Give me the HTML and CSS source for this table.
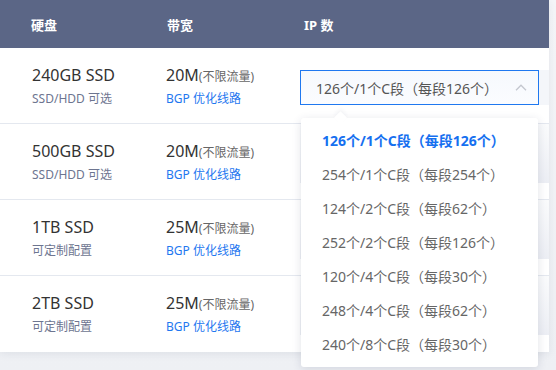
FILE: index.html
```html
<!DOCTYPE html>
<html lang="zh">
<head>
<meta charset="utf-8">
<link rel="stylesheet" href="styles.css">
</head>
<body>
<div class="page">
  <div class="table">
    <div class="head">
      <div class="h h1">硬盘</div>
      <div class="h h2">带宽</div>
      <div class="h h3">IP 数</div>
    </div>
    <div class="row">
      <div class="c1"><div class="title">240GB SSD</div><div class="sub">SSD/HDD 可选</div></div>
      <div class="c2"><div class="title">20M<span class="small">(不限流量)</span></div><div class="link">BGP 优化线路</div></div>
      <div class="c3">
        <div class="select">
          <span class="val">126个/1个C段（每段126个）</span>
          <svg class="chev" width="12" height="7" viewBox="0 0 12 7"><path d="M1 6.2 L6 1.2 L11 6.2" fill="none" stroke="#c4c7cf" stroke-width="1.3"/></svg>
        </div>
      </div>
    </div>
    <div class="row">
      <div class="c1"><div class="title">500GB SSD</div><div class="sub">SSD/HDD 可选</div></div>
      <div class="c2"><div class="title">20M<span class="small">(不限流量)</span></div><div class="link">BGP 优化线路</div></div>
      <div class="c3"><div class="shade"></div></div>
    </div>
    <div class="row">
      <div class="c1"><div class="title">1TB SSD</div><div class="sub">可定制配置</div></div>
      <div class="c2"><div class="title">25M<span class="small">(不限流量)</span></div><div class="link">BGP 优化线路</div></div>
      <div class="c3"><div class="shade"></div></div>
    </div>
    <div class="row last">
      <div class="c1"><div class="title">2TB SSD</div><div class="sub">可定制配置</div></div>
      <div class="c2"><div class="title">25M<span class="small">(不限流量)</span></div><div class="link">BGP 优化线路</div></div>
      <div class="c3"><div class="shade"></div></div>
    </div>
  </div>

  <div class="menu">
    <div class="arrow"></div>
    <div class="item active">126个/1个C段（每段126个）</div>
    <div class="item">254个/1个C段（每段254个）</div>
    <div class="item">124个/2个C段（每段62个）</div>
    <div class="item">252个/2个C段（每段126个）</div>
    <div class="item">120个/4个C段（每段30个）</div>
    <div class="item">248个/4个C段（每段62个）</div>
    <div class="item">240个/8个C段（每段30个）</div>
  </div>
</div>
</body>
</html>
```

FILE: styles.css
```css
html, body {
  margin: 0;
  padding: 0;
}
body {
  width: 556px;
  height: 370px;
  overflow: hidden;
  font-family: "Noto Sans", "Noto Sans CJK SC", sans-serif;
  background: linear-gradient(to bottom, #f4f5f8 0%, #eef0f4 100%);
}
.page {
  position: relative;
  width: 556px;
  height: 370px;
}
.table {
  width: 549px;
  background: #fff;
  box-shadow: 0 2px 8px rgba(40, 50, 80, 0.08);
}
.head {
  height: 48px;
  background: #5b6686;
  display: flex;
  align-items: center;
  color: #fff;
  font-weight: 700;
  font-size: 13px;
}
.h1 { margin-left: 31px; width: 136px; }
.h2 { width: 137px; }
.row {
  height: 75px;
  border-bottom: 1px solid #e4e8ef;
  display: flex;
}
.row.last { border-bottom: none; height: 76px; }
.c1 {
  width: 166px;
  padding-left: 32px;
  padding-top: 16px;
  box-sizing: border-box;
}
.c2 {
  width: 134px;
  padding-top: 16px;
  box-sizing: border-box;
}
.c3 {
  flex: 1;
}
.title {
  font-size: 16px;
  color: #333;
  line-height: 22px;
  height: 22px;
}
.small {
  font-size: 12px;
  color: #666;
}
.sub {
  font-size: 12px;
  color: #6d7590;
  margin-top: 4px;
  line-height: 17px;
}
.link {
  font-size: 12px;
  color: #1f78f0;
  margin-top: 4px;
  line-height: 17px;
}
.select {
  margin-top: 22px;
  height: 35px;
  width: 239px;
  box-sizing: border-box;
  border: 1px solid #1f78f0;
  background: linear-gradient(to bottom, #f6f9fd, #fbfcff);
  display: flex;
  align-items: center;
  padding-left: 15px;
  padding-right: 11px;
  font-size: 14px;
  color: #555;
  box-shadow: 10px 0 0 #f4f6fa;
}
.val { flex: 1; }
.chev { display: block; }
.shade {
  height: 59px;
  background: linear-gradient(to bottom, #fafbfc, #eceef4);
}
.menu {
  position: absolute;
  left: 301px;
  top: 118px;
  width: 237px;
  padding: 6px 0 5px;
  background: #fff;
  border-radius: 3px;
  box-shadow: 0 2px 10px rgba(40, 50, 90, 0.14);
}
.arrow {
  position: absolute;
  top: -5px;
  left: 35px;
  width: 9px;
  height: 9px;
  background: #fff;
  transform: rotate(45deg);
  box-shadow: -2px -2px 4px rgba(40, 50, 90, 0.05);
}
.item {
  position: relative;
  height: 34px;
  line-height: 34px;
  padding-left: 21px;
  font-size: 14px;
  color: #666;
}
.item.active {
  color: #1670f0;
  font-weight: 700;
}
```
